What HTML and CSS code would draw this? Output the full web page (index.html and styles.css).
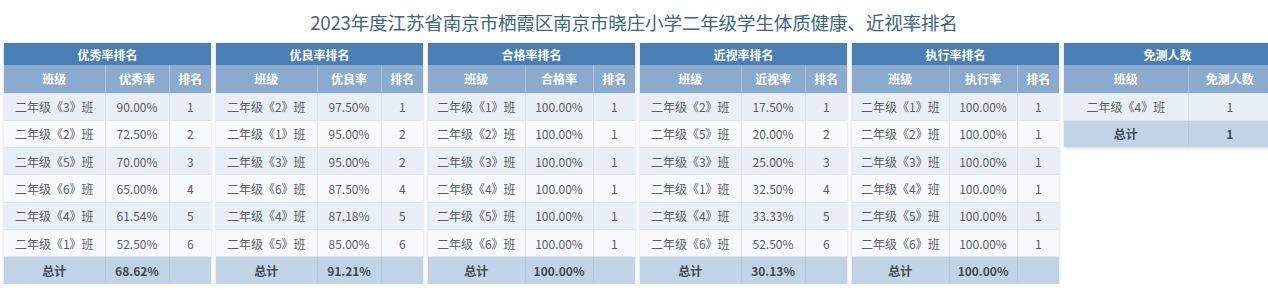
FILE: index.html
```html
<!DOCTYPE html>
<html lang="zh-CN">
<head>
<meta charset="utf-8">
<title>体质健康、近视率排名</title>
<link rel="stylesheet" href="styles.css">
</head>
<body>
<h1 class="page-title">2023年度江苏省南京市栖霞区南京市晓庄小学二年级学生体质健康、近视率排名</h1>
<div class="boards">
  <table class="rank">
    <colgroup><col class="c-class"><col class="c-rate"><col class="c-no"></colgroup>
    <thead>
      <tr class="t-title"><th colspan="3">优秀率排名</th></tr>
      <tr class="t-head"><th>班级</th><th>优秀率</th><th>排名</th></tr>
    </thead>
    <tbody>
      <tr><td>二年级《3》班</td><td>90.00%</td><td>1</td></tr>
      <tr><td>二年级《2》班</td><td>72.50%</td><td>2</td></tr>
      <tr><td>二年级《5》班</td><td>70.00%</td><td>3</td></tr>
      <tr><td>二年级《6》班</td><td>65.00%</td><td>4</td></tr>
      <tr><td>二年级《4》班</td><td>61.54%</td><td>5</td></tr>
      <tr><td>二年级《1》班</td><td>52.50%</td><td>6</td></tr>
      <tr class="t-total"><td>总计</td><td>68.62%</td><td></td></tr>
    </tbody>
  </table>
  <table class="rank">
    <colgroup><col class="c-class"><col class="c-rate"><col class="c-no"></colgroup>
    <thead>
      <tr class="t-title"><th colspan="3">优良率排名</th></tr>
      <tr class="t-head"><th>班级</th><th>优良率</th><th>排名</th></tr>
    </thead>
    <tbody>
      <tr><td>二年级《2》班</td><td>97.50%</td><td>1</td></tr>
      <tr><td>二年级《1》班</td><td>95.00%</td><td>2</td></tr>
      <tr><td>二年级《3》班</td><td>95.00%</td><td>2</td></tr>
      <tr><td>二年级《6》班</td><td>87.50%</td><td>4</td></tr>
      <tr><td>二年级《4》班</td><td>87.18%</td><td>5</td></tr>
      <tr><td>二年级《5》班</td><td>85.00%</td><td>6</td></tr>
      <tr class="t-total"><td>总计</td><td>91.21%</td><td></td></tr>
    </tbody>
  </table>
  <table class="rank wide">
    <colgroup><col class="c-class"><col class="c-rate"><col class="c-no"></colgroup>
    <thead>
      <tr class="t-title"><th colspan="3">合格率排名</th></tr>
      <tr class="t-head"><th>班级</th><th>合格率</th><th>排名</th></tr>
    </thead>
    <tbody>
      <tr><td>二年级《1》班</td><td>100.00%</td><td>1</td></tr>
      <tr><td>二年级《2》班</td><td>100.00%</td><td>1</td></tr>
      <tr><td>二年级《3》班</td><td>100.00%</td><td>1</td></tr>
      <tr><td>二年级《4》班</td><td>100.00%</td><td>1</td></tr>
      <tr><td>二年级《5》班</td><td>100.00%</td><td>1</td></tr>
      <tr><td>二年级《6》班</td><td>100.00%</td><td>1</td></tr>
      <tr class="t-total"><td>总计</td><td>100.00%</td><td></td></tr>
    </tbody>
  </table>
  <table class="rank">
    <colgroup><col class="c-class"><col class="c-rate"><col class="c-no"></colgroup>
    <thead>
      <tr class="t-title"><th colspan="3">近视率排名</th></tr>
      <tr class="t-head"><th>班级</th><th>近视率</th><th>排名</th></tr>
    </thead>
    <tbody>
      <tr><td>二年级《2》班</td><td>17.50%</td><td>1</td></tr>
      <tr><td>二年级《5》班</td><td>20.00%</td><td>2</td></tr>
      <tr><td>二年级《3》班</td><td>25.00%</td><td>3</td></tr>
      <tr><td>二年级《1》班</td><td>32.50%</td><td>4</td></tr>
      <tr><td>二年级《4》班</td><td>33.33%</td><td>5</td></tr>
      <tr><td>二年级《6》班</td><td>52.50%</td><td>6</td></tr>
      <tr class="t-total"><td>总计</td><td>30.13%</td><td></td></tr>
    </tbody>
  </table>
  <table class="rank wide">
    <colgroup><col class="c-class"><col class="c-rate"><col class="c-no"></colgroup>
    <thead>
      <tr class="t-title"><th colspan="3">执行率排名</th></tr>
      <tr class="t-head"><th>班级</th><th>执行率</th><th>排名</th></tr>
    </thead>
    <tbody>
      <tr><td>二年级《1》班</td><td>100.00%</td><td>1</td></tr>
      <tr><td>二年级《2》班</td><td>100.00%</td><td>1</td></tr>
      <tr><td>二年级《3》班</td><td>100.00%</td><td>1</td></tr>
      <tr><td>二年级《4》班</td><td>100.00%</td><td>1</td></tr>
      <tr><td>二年级《5》班</td><td>100.00%</td><td>1</td></tr>
      <tr><td>二年级《6》班</td><td>100.00%</td><td>1</td></tr>
      <tr class="t-total"><td>总计</td><td>100.00%</td><td></td></tr>
    </tbody>
  </table>
  <table class="rank exempt">
    <colgroup><col class="c-class"><col class="c-count"></colgroup>
    <thead>
      <tr class="t-title"><th colspan="2">免测人数</th></tr>
      <tr class="t-head"><th>班级</th><th>免测人数</th></tr>
    </thead>
    <tbody>
      <tr><td>二年级《4》班</td><td>1</td></tr>
      <tr class="t-total"><td>总计</td><td>1</td></tr>
    </tbody>
  </table>
</div>
</body>
</html>
```

FILE: styles.css
```css
html, body {
  margin: 0;
  padding: 0;
  background: #ffffff;
  overflow: hidden;
}

body {
  font-family: "Noto Sans CJK SC", "Noto Sans", sans-serif;
}

.page-title {
  margin: 0;
  height: 43px;
  line-height: 44px;
  text-align: center;
  font-size: 18.6px;
  font-weight: normal;
  color: #3d6586;
  letter-spacing: -0.2px;
}

.boards {
  display: flex;
  align-items: flex-start;
  gap: 5px;
  padding-left: 4px;
}

.rank {
  flex: none;
  width: 206.8px;
  border-collapse: collapse;
  table-layout: fixed;
  font-size: 12px;
  box-shadow: 0 1px 3px rgba(0, 0, 0, 0.18);
}

.rank .c-class { width: 101px; }
.rank .c-rate { width: 64px; }
.rank .c-no { width: 42px; }
.rank.wide .c-class { width: 97px; }
.rank.wide .c-rate { width: 68px; }
.rank.exempt .c-class { width: 124px; }
.rank.exempt .c-count { width: 83px; }

.t-title th {
  height: 22px;
  padding: 0;
  background: #4a7fb5;
  color: #ffffff;
  font-weight: bold;
  font-size: 12px;
  text-align: center;
}

.t-head th {
  height: 27.5px;
  padding: 0;
  background: #8aabcd;
  color: #ffffff;
  font-weight: bold;
  font-size: 12px;
  text-align: center;
  border-left: 1px solid #a9c0d8;
}

.t-head th:first-child {
  border-left: none;
}

.rank td {
  height: 26.3px;
  padding: 0;
  text-align: center;
  color: #585d63;
  border-top: 1px solid #dde4ec;
  border-left: 1px solid #dde4ec;
  white-space: nowrap;
}

.rank td:first-child {
  border-left: none;
}

.rank tbody tr:nth-child(odd) td {
  background: #e9eff6;
}

.rank tbody tr:nth-child(even) td {
  background: #f8fafd;
}

.rank tbody tr.t-total td {
  background: #c1d4e5;
  color: #3e4a55;
  font-weight: bold;
  border-left-color: #b7cadb;
}
```
